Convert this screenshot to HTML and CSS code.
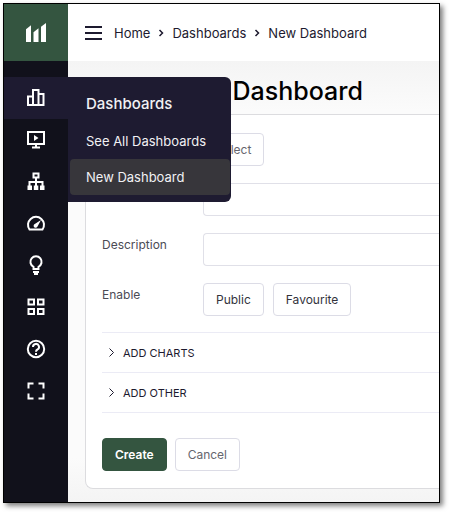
FILE: index.html
```html
<!DOCTYPE html>
<html lang="en">
<head>
    <meta charset="UTF-8" />
    <meta name="viewport" content="width=device-width, initial-scale=1.0" />
    <title>New Dashboard</title>
    <link rel="stylesheet" href="styles.css">
</head>
<body>

<div class="window">
    <nav class="sidebar" aria-label="Main">
        <a class="logo" href="#" aria-label="Start">
            <svg width="20" height="19" viewBox="0 0 20 19" fill="#fff"><path d="M0 6.300 5 2.300V19H0zM7.500 9.300 12.500 5.300V19H7.500zM15 3.800 20 0V19H15z"/></svg>
        </a>
        <ul class="menu">
            <li class="active">
                <a href="#" aria-label="Dashboards"><svg viewBox="0 0 20 20"><path d="M2 18V9.500h5V18zM7 18V3h5.500v15zM12.500 18V7h5v11z"/></svg></a>
                <div class="submenu">
                    <h2>Dashboards</h2>
                    <a href="#">See All Dashboards</a>
                    <a class="current" href="#">New Dashboard</a>
                </div>
            </li>
            <li><a href="#" aria-label="Presentations"><svg viewBox="0 0 20 20"><path d="M2 3h16v12H2zM10 15v3.500M6 18.500h8"/><path class="solid" d="M8 6v6L12.500 9z"/></svg></a></li>
            <li><a href="#" aria-label="Network"><svg viewBox="0 0 20 20"><path d="M7.500 2.500h5v4h-5zM10 7v8M3.500 15v-4h13v4"/><path class="solid" d="M1.500 14.500h4.500v4.500H1.500zM7.800 14.500h4.500v4.500h-4.500zM14 14.500h4.500v4.500h-4.500z"/></svg></a></li>
            <li><a href="#" aria-label="Performance"><svg viewBox="0 0 20 20"><path d="M3.500 16.500A8 8 0 1 1 16.500 16.500z"/><path class="solid" d="M15 7 11.500 13.500A2 2 0 1 1 8.800 11z"/></svg></a></li>
            <li><a href="#" aria-label="Ideas"><svg viewBox="0 0 20 20"><path d="M7.500 14v-2.200A5.600 5.600 0 1 1 12.500 11.800V14zM7 17h6M8 19h4"/></svg></a></li>
            <li><a href="#" aria-label="Apps"><svg viewBox="0 0 20 20"><path d="M2.500 2.500h5.500v5h-5.500zM12 2.500h5.500v5H12zM2.500 12h5.500v5h-5.500zM12 12h5.500v5H12z"/></svg></a></li>
            <li><a href="#" aria-label="Help"><svg viewBox="0 0 20 20"><circle cx="10" cy="10" r="8.200"/><path d="M7 8a3 3 0 1 1 4.500 2.500Q10 11.300 10 12.800"/><path class="solid" d="M9 14h2v2H9z"/></svg></a></li>
            <li><a href="#" aria-label="Full screen"><svg viewBox="0 0 20 20"><path d="M7.500 2.500h-5v5M12.500 2.500h5v5M7.500 17.500h-5v-5M12.500 17.500h5v-5"/></svg></a></li>
        </ul>
    </nav>

    <div class="content">
        <header class="topbar">
            <button class="burger" type="button" aria-label="Toggle menu"><span></span><span></span><span></span></button>
            <nav class="breadcrumb" aria-label="Breadcrumb">
                <a href="#">Home</a>
                <svg width="6" height="8" viewBox="0 0 6 8"><path d="M1.500 1 4.500 4 1.500 7"/></svg>
                <a href="#">Dashboards</a>
                <svg width="6" height="8" viewBox="0 0 6 8"><path d="M1.500 1 4.500 4 1.500 7"/></svg>
                <a href="#">New Dashboard</a>
            </nav>
        </header>

        <main class="page">
            <h1>New Dashboard</h1>
            <form class="card">
                <div class="row">
                    <span class="label">Image</span>
                    <button class="btn muted" type="button">Select</button>
                </div>
                <div class="row">
                    <label class="label" for="name">Name</label>
                    <input type="text" id="name" />
                </div>
                <div class="row">
                    <label class="label" for="description">Description</label>
                    <input type="text" id="description" />
                </div>
                <div class="row">
                    <span class="label">Enable</span>
                    <button class="btn" type="button">Public</button>
                    <button class="btn" type="button">Favourite</button>
                </div>
                <div class="sections">
                    <button class="section" type="button"><svg width="7" height="9" viewBox="0 0 7 9"><path d="M1.500.500 5.500 4.500 1.500 8.500"/></svg>ADD CHARTS</button>
                    <button class="section" type="button"><svg width="7" height="9" viewBox="0 0 7 9"><path d="M1.500.500 5.500 4.500 1.500 8.500"/></svg>ADD OTHER</button>
                </div>
                <div class="actions">
                    <button class="btn primary" type="submit">Create</button>
                    <button class="btn muted" type="button">Cancel</button>
                </div>
            </form>
        </main>
    </div>
</div>

</body>
</html>
```
FILE: styles.css
```css
* {
    box-sizing: border-box;
}

body {
    margin: 0;
    padding: 3px 9px 9px 3px;
    height: 100vh;
    background: #fff;
    color: #1d1a2f;
    font-family: Inter, "Liberation Sans", sans-serif;
    font-size: 12px;
    line-height: 16px;
    overflow: hidden;
}

a {
    color: inherit;
    text-decoration: none;
}

button {
    font: inherit;
    color: inherit;
    cursor: pointer;
}

.window {
    display: flex;
    height: 100%;
    border: 1px solid #000;
    box-shadow: 3px 3px 5px rgba(0, 0, 0, 0.5);
}

/* Sidebar */
.sidebar {
    flex: 0 0 64px;
    background: #11111b;
}

.logo {
    display: flex;
    align-items: center;
    justify-content: center;
    height: 57px;
    background: #345540;
}

.menu {
    list-style: none;
    margin: 16px 0 0;
    padding: 0;
}

.menu li {
    position: relative;
}

.menu li > a {
    display: flex;
    align-items: center;
    justify-content: center;
    height: 42px;
    padding-bottom: 2px;
}

.menu svg {
    width: 20px;
    height: 20px;
    fill: none;
    stroke: #fff;
    stroke-width: 2;
}

.menu .solid {
    fill: #fff;
    stroke: none;
}

.active {
    background: #1e1b31;
}

.submenu {
    position: absolute;
    top: 0;
    left: 100%;
    z-index: 1;
    width: 163px;
    padding: 17px 1px 7px 2px;
    background: #1e1b31;
    border-radius: 0 6px 6px 0;
    color: #f1f1f4;
}

.submenu h2 {
    margin: 0 0 9px;
    padding: 0 16px;
    font-size: 15px;
    font-weight: 500;
    line-height: 20px;
}

.submenu a {
    display: block;
    padding: 0 16px;
    border-radius: 4px;
    font-size: 13px;
    line-height: 36px;
    white-space: nowrap;
}

.submenu .current {
    background: #37363b;
}

/* Top bar */
.content {
    flex: 1;
    display: flex;
    flex-direction: column;
    min-width: 0;
}

.topbar {
    display: flex;
    flex: none;
    align-items: center;
    gap: 12px;
    height: 57px;
    padding: 0 17px;
    background: #fff;
}

.burger {
    display: grid;
    gap: 4px;
    width: 17px;
    padding: 0;
    border: 0;
    background: none;
}

.burger span {
    height: 2px;
    background: #1d1a2f;
}

.breadcrumb {
    display: flex;
    align-items: center;
    gap: 8px;
    font-size: 13px;
    white-space: nowrap;
}

.breadcrumb svg {
    fill: none;
    stroke: #1d1a2f;
    stroke-width: 1.5;
}

/* Page */
.page {
    flex: 1;
    padding: 14px 0 13px 17px;
    background: linear-gradient(#f4f4f4, #fbfbfb 50px, #fbfbfb 90%, #f4f4f4);
}

h1 {
    margin: 0 0 7px;
    padding-left: 87px;
    color: #000;
    font-size: 25px;
    font-weight: 500;
    line-height: 32px;
    white-space: nowrap;
}

.card {
    padding: 18px 0 17px 16px;
    background: #fff;
    border: 1px solid #dcdcdf;
    border-right: 0;
    border-radius: 8px 0 0 8px;
}

.row {
    display: flex;
    gap: 9px;
    height: 33px;
    margin-bottom: 17px;
}

.label {
    flex: 0 0 92px;
    padding-top: 4px;
    color: #4b4b55;
}

.row input {
    flex: 1;
    min-width: 0;
    padding: 0 12px;
    border: 1px solid #e0e0e8;
    border-right: 0;
    border-radius: 4px 0 0 4px;
    font: inherit;
}

.btn {
    height: 33px;
    padding: 0 12px;
    background: #fff;
    border: 1px solid #dcdce6;
    border-radius: 4px;
    color: #33333c;
}

.muted {
    color: #66666e;
}

.primary {
    background: #345540;
    border-color: #345540;
    color: #fff;
    font-weight: 600;
}

.sections {
    margin-top: -1px;
    border-top: 1px solid #ebebf5;
}

.section {
    display: flex;
    align-items: center;
    gap: 8px;
    width: 100%;
    height: 40px;
    padding: 0 6px;
    background: none;
    border: 0;
    border-bottom: 1px solid #ebebf5;
    font-size: 11px;
}

.section svg {
    fill: none;
    stroke: #1d1a2f;
}

.actions {
    display: flex;
    gap: 8px;
    margin-top: 25px;
}
```
